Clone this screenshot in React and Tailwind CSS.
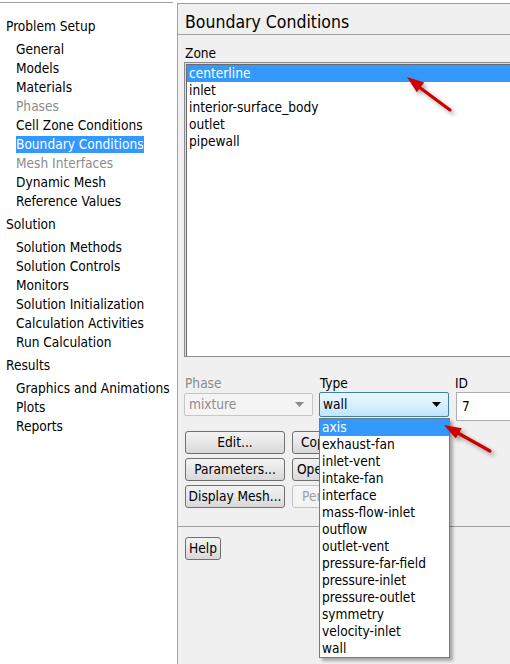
import React from "react";

const tree = [
  {
    title: "Problem Setup",
    items: [
      ["General"],
      ["Models"],
      ["Materials"],
      ["Phases", "disabled"],
      ["Cell Zone Conditions"],
      ["Boundary Conditions", "selected"],
      ["Mesh Interfaces", "disabled"],
      ["Dynamic Mesh"],
      ["Reference Values"],
    ],
  },
  {
    title: "Solution",
    items: [
      ["Solution Methods"],
      ["Solution Controls"],
      ["Monitors"],
      ["Solution Initialization"],
      ["Calculation Activities"],
      ["Run Calculation"],
    ],
  },
  {
    title: "Results",
    items: [["Graphics and Animations"], ["Plots"], ["Reports"]],
  },
];

const zones = ["centerline", "inlet", "interior-surface_body", "outlet", "pipewall"];

const types = [
  "axis",
  "exhaust-fan",
  "inlet-vent",
  "intake-fan",
  "interface",
  "mass-flow-inlet",
  "outflow",
  "outlet-vent",
  "pressure-far-field",
  "pressure-inlet",
  "pressure-outlet",
  "symmetry",
  "velocity-inlet",
  "wall",
];

function Tree() {
  return (
    <div className="w-[177px] shrink-0 bg-white">
      <div className="mt-[2px] mr-[4px] border-t border-[#a0a0a0] pt-[14px]">
        {tree.map((group, gi) => (
          <div key={group.title} className={gi > 0 ? "mt-[4px]" : ""}>
            <div className="h-[19px] pl-[6px] leading-[19px] text-[#000]">{group.title}</div>
            <div className="mt-[4px]">
              {group.items.map(([label, state]) => (
                <div key={label} className="flex h-[19px] items-center pl-[16px]">
                  <span
                    className={
                      state === "selected"
                        ? "h-[17px] whitespace-nowrap bg-[#3399ff] leading-[17px] text-white"
                        : state === "disabled"
                        ? "h-[17px] whitespace-nowrap leading-[17px] text-[#8c8c8c]"
                        : "h-[17px] whitespace-nowrap leading-[17px] text-[#000]"
                    }
                  >
                    {label}
                  </span>
                </div>
              ))}
            </div>
          </div>
        ))}
      </div>
    </div>
  );
}

function Button({ children, className = "", disabled = false }) {
  return (
    <div
      className={
        (disabled
          ? "border-[#c2c5c8] bg-[#f4f4f4] text-[#a0a0a0] "
          : "border-[#707070] bg-linear-to-b from-[#f2f2f2] via-[#e7e7e7] to-[#d8d8d8] text-[#000] ") +
        "flex h-[23px] shrink-0 items-center overflow-hidden whitespace-nowrap rounded-[3px] border " +
        className
      }
    >
      {children}
    </div>
  );
}

function Arrow({ d, head }) {
  return (
    <g filter="url(#arrowShadow)">
      <path d={d} stroke="#cc0000" strokeWidth="3.2" strokeLinecap="round" fill="none" />
      <polygon points={head} fill="#cc0000" />
    </g>
  );
}

export default function App() {
  return (
    <div className="relative flex h-[664px] w-[510px] overflow-hidden bg-white font-['DejaVu_Sans_Condensed','DejaVu_Sans',sans-serif] text-[13.6px] font-stretch-condensed">
      <Tree />

      {/* task page */}
      <div className="mt-[3px] flex min-w-0 flex-1 flex-col overflow-hidden border-t border-l border-[#a0a0a0] bg-[#f0f0f0]">
        <div className="flex h-[31px] shrink-0 items-center border-b border-[#a0a0a0] pt-[6px] pl-[7px] text-[17.5px] text-[#000]">
          Boundary Conditions
        </div>

        <div className="pl-[6px]">
          <div className="mt-[10px] h-[16px] pl-[1px] leading-[16px] text-[#000]">Zone</div>

          {/* zone list */}
          <div className="mt-[1px] h-[295px] w-[340px] border border-[#8a8a8a] bg-[#dcdcdc] pt-px pl-px">
            <div className="h-full border-t border-l border-[#6a6a6a] bg-white">
              {zones.map((z, i) => (
                <div
                  key={z}
                  className={
                    (i === 0 ? "bg-[#3399ff] text-white " : "text-[#000] ") +
                    "h-[17px] whitespace-nowrap pl-[2px] leading-[17px]"
                  }
                >
                  {z}
                </div>
              ))}
            </div>
          </div>

          {/* phase / type / id */}
          <div className="mt-[18px] flex h-[16px] leading-[16px]">
            <div className="w-[135px] shrink-0 pl-[1px] text-[#8c8c8c]">Phase</div>
            <div className="w-[136px] shrink-0 pl-[1px] text-[#000]">Type</div>
            <div className="text-[#000]">ID</div>
          </div>
          <div className="flex h-[30px] items-start">
            <div className="mt-[2px] flex h-[23px] w-[129px] shrink-0 items-center justify-between rounded-[2px] border border-[#c6c6c6] bg-[#f4f4f4] pr-[8px] pl-[4px] text-[#8c8c8c]">
              <span>mixture</span>
              <svg width="9" height="5" viewBox="0 0 9 5">
                <polygon points="0,0 9,0 4.5,5" fill="#8a8a8a" />
              </svg>
            </div>
            <div className="mt-[1px] ml-[6px] flex h-[25px] w-[130px] shrink-0 items-center justify-between rounded-[2px] border border-[#3c7fb1] bg-linear-to-b from-[#eaf6fd] via-[#d9f0fc] to-[#bee6fd] pr-[7px] pl-[3px] text-[#000]">
              <span>wall</span>
              <svg width="9" height="5" viewBox="0 0 9 5">
                <polygon points="0,0 9,0 4.5,5" fill="#000" />
              </svg>
            </div>
            <div className="mt-[1px] ml-[7px] flex h-[29px] w-[80px] shrink-0 items-center border border-[#abadb3] bg-white pl-[5px] text-[#000]">
              7
            </div>
          </div>

          {/* action buttons; the second column runs under the open list */}
          <div className="mt-[10px] ml-[1px] flex flex-col gap-[4px]">
            <div className="flex gap-[7px]">
              <Button className="w-[100px] justify-center">Edit...</Button>
              <Button className="w-[100px] pl-[8px]">Copy...</Button>
            </div>
            <div className="flex gap-[7px]">
              <Button className="w-[100px] justify-center">Parameters...</Button>
              <Button className="w-[100px] pl-[4px]">Operating...</Button>
            </div>
            <div className="flex gap-[7px]">
              <Button className="w-[100px] justify-center">Display Mesh...</Button>
              <Button className="w-[100px] pl-[9px]" disabled>
                Periodic...
              </Button>
            </div>
          </div>
        </div>

        <div className="mt-[18px] border-t border-[#a0a0a0]" />
        <div className="pt-[10px] pl-[7px]">
          <Button className="w-[36px] justify-center">Help</Button>
        </div>
      </div>

      {/* open Type dropdown */}
      <div className="absolute top-[418px] left-[319px] w-[131px] border border-[#7a7a7a] bg-white shadow-[3px_3px_3px_rgba(0,0,0,0.3)]">
        {types.map((t, i) => (
          <div
            key={t}
            className={
              (i === 0 ? "bg-[#3399ff] text-white " : "text-[#000] ") +
              "h-[17px] whitespace-nowrap pl-[2px] leading-[17px]"
            }
          >
            {t}
          </div>
        ))}
      </div>

      {/* red callout arrows */}
      <svg className="pointer-events-none absolute top-0 left-0" width="510" height="664" viewBox="0 0 510 664">
        <defs>
          <filter id="arrowShadow" x="-20%" y="-20%" width="160%" height="160%">
            <feDropShadow dx="3" dy="3" stdDeviation="2" floodColor="#000" floodOpacity="0.35" />
          </filter>
        </defs>
        <Arrow d="M450 110 L419 87" head="407,77 424.2,82.6 416.8,92.2" />
        <Arrow d="M490 451 L457 432.5" head="444,425 461.8,428.2 455.8,438.6" />
      </svg>
    </div>
  );
}
